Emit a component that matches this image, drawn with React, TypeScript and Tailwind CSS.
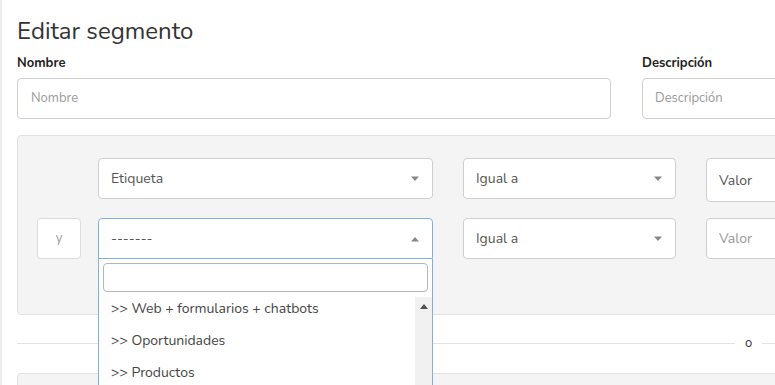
import React from "react";

function Caret({ up = false }: { up?: boolean }) {
  return (
    <svg width="10" height="6" viewBox="0 0 10 6" className="shrink-0">
      {up ? <path d="M1 5.5 L5 1 L9 5.5 Z" fill="#888" /> : <path d="M1 0.5 L5 5 L9 0.5 Z" fill="#888" />}
    </svg>
  );
}

function SelectBox({ text, width }: { text: string; width: string }) {
  return (
    <div
      className={`flex h-[41px] ${width} shrink-0 items-center justify-between rounded-[4px] border border-[#cfcfcf] bg-white pl-[12px] pr-[12px] text-[14px] text-[#555]`}
    >
      <span>{text}</span>
      <Caret />
    </div>
  );
}

export default function App() {
  const options = [">> Web + formularios + chatbots", ">> Oportunidades", ">> Productos"];

  return (
    <div
      className="relative h-[385px] w-[775px] overflow-hidden border-l-[2px] border-[#ececec] bg-white text-[#333]"
      style={{ fontFamily: "Nunito, Lato, 'Open Sans', sans-serif" }}
    >
      <div className="w-[1000px] pl-[15px]">
        <h1 className="pt-[16px] text-[24px] leading-[30px] font-normal text-[#333]">Editar segmento</h1>

        <div className="mt-[8px] flex gap-[31px]">
          <div className="w-[594px] shrink-0">
            <label className="block text-[13px] leading-[18px] font-bold text-[#222]">Nombre</label>
            <div className="mt-[6px] flex h-[41px] items-center rounded-[4px] border border-[#cfcfcf] bg-white px-[13px] text-[13px] text-[#999]">
              Nombre
            </div>
          </div>
          <div className="w-[300px] shrink-0">
            <label className="block text-[13px] leading-[18px] font-bold text-[#222]">Descripción</label>
            <div className="mt-[6px] flex h-[41px] items-center rounded-[4px] border border-[#cfcfcf] bg-white px-[12px] text-[13px] text-[#999]">
              Descripción
            </div>
          </div>
        </div>

        <div className="mt-[16px] h-[180px] rounded-[4px] border border-[#e0e0e0] bg-[#f4f4f4] pt-[22px] pl-[19px]">
          <div className="flex items-start">
            <div className="w-[44px] shrink-0" />
            <div className="ml-[17px]">
              <SelectBox text="Etiqueta" width="w-[335px]" />
            </div>
            <div className="ml-[30px]">
              <SelectBox text="Igual a" width="w-[213px]" />
            </div>
            <div className="ml-[30px] flex h-[44px] w-[200px] shrink-0 items-center rounded-[4px] border border-[#cfcfcf] bg-white px-[12px] text-[14px] text-[#555]">
              Valor
            </div>
          </div>

          <div className="mt-[16px] flex items-start">
            <div className="flex h-[41px] w-[44px] shrink-0 items-center justify-center rounded-[4px] border border-[#dcdcdc] bg-white text-[13px] text-[#999]">
              y
            </div>
            <div className="relative ml-[17px] w-[335px] shrink-0">
              <div className="flex h-[41px] items-center justify-between rounded-t-[4px] border border-[#7fb0ea] bg-white pr-[12px] pl-[12px] text-[14px] text-[#555]">
                <span>-------</span>
                <Caret up />
              </div>
              <div className="absolute top-[41px] left-0 z-10 h-[140px] w-[335px] border-x border-[#7fb0ea] bg-white">
                <div className="px-[4px] pt-[4px]">
                  <div className="h-[29px] rounded-[4px] border border-[#b5b5b5] bg-white" />
                </div>
                <div className="mt-[5px] flex">
                  <ul className="flex-1">
                    {options.map((o) => (
                      <li key={o} className="h-[32px] pl-[12px] text-[14px] leading-[23px] text-[#444]">
                        {o}
                      </li>
                    ))}
                  </ul>
                  <div className="flex h-[120px] w-[17px] justify-center bg-[#f1f1f1] pt-[7px]">
                    <svg width="8" height="5" viewBox="0 0 8 5">
                      <path d="M0 5 L4 0 L8 5 Z" fill="#505050" />
                    </svg>
                  </div>
                </div>
              </div>
            </div>
            <div className="ml-[30px]">
              <SelectBox text="Igual a" width="w-[213px]" />
            </div>
            <div className="ml-[30px] flex h-[41px] w-[200px] shrink-0 items-center rounded-[4px] border border-[#cfcfcf] bg-white px-[12px] text-[14px] text-[#999]">
              Valor
            </div>
          </div>
        </div>

        <div className="mt-[20px] flex items-center">
          <div className="h-px w-[718px] bg-[#e2e2e2]" />
          <span className="mx-[10px] text-[13px] leading-[16px] text-[#333]">o</span>
          <div className="h-px flex-1 bg-[#e2e2e2]" />
        </div>

        <div className="mt-[22px] h-[40px] rounded-t-[4px] border border-[#e0e0e0] bg-[#f4f4f4]" />
      </div>
    </div>
  );
}
